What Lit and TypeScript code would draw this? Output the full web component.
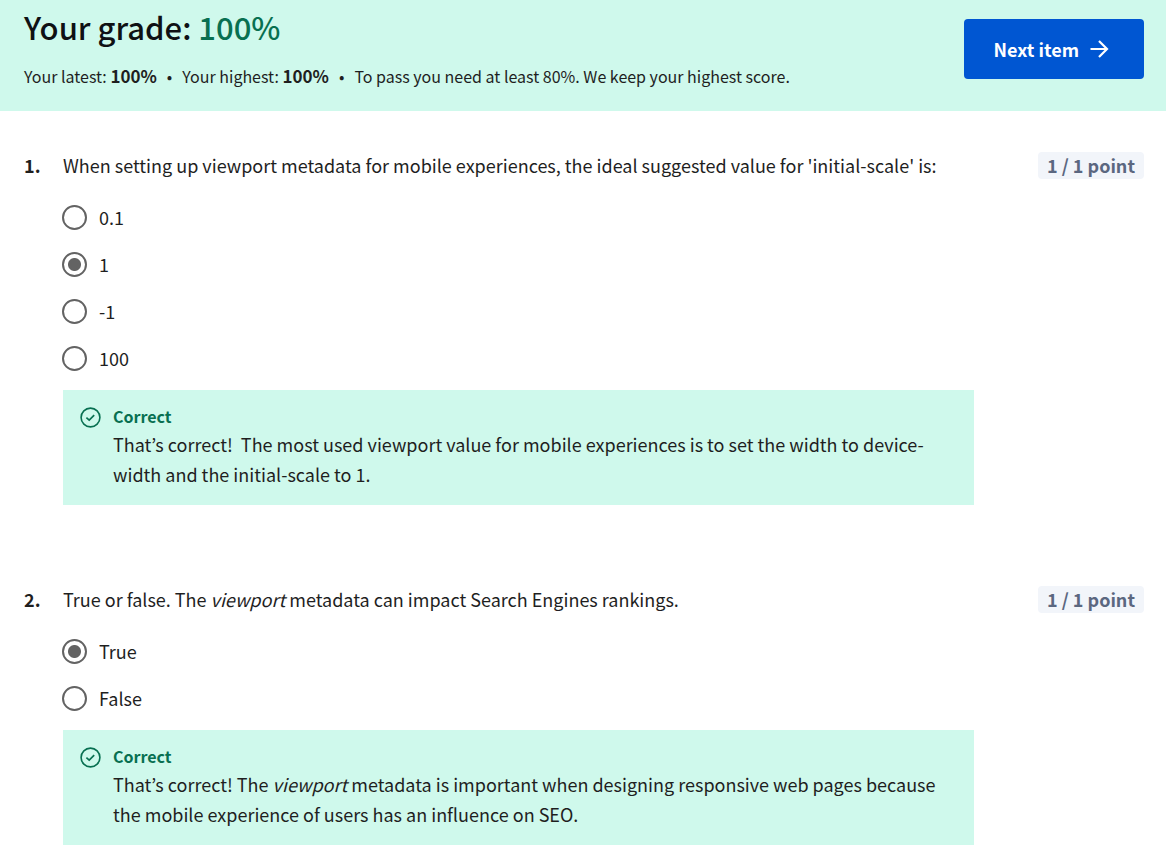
import { LitElement, html, css, svg, TemplateResult } from "lit";
import { customElement, property } from "lit/decorators.js";

interface Question {
  id: number;
  prompt: TemplateResult;
  options: string[];
  selected: number;
  feedback: TemplateResult;
}

const QUESTIONS: Question[] = [
  {
    id: 1,
    prompt: html`When setting up viewport metadata for mobile experiences, the ideal suggested value for 'initial-scale' is:`,
    options: ["0.1", "1", "-1", "100"],
    selected: 1,
    feedback: html`That’s correct!&nbsp; The most used viewport value for mobile experiences is to set the width to device-width and the initial-scale to 1.`,
  },
  {
    id: 2,
    prompt: html`True or false. The <em>viewport</em> metadata can impact Search Engines rankings.`,
    options: ["True", "False"],
    selected: 0,
    feedback: html`That’s correct! The <em>viewport</em> metadata is important when designing responsive web pages because the mobile experience of users has an influence on SEO.`,
  },
];

const arrowIcon = svg`<path d="M1.500 10h16.500M10 2l8 8-8 8" fill="none" stroke="currentColor" stroke-width="2.200"/>`;

@customElement("quiz-question")
export class QuizQuestion extends LitElement {
  @property({ attribute: false }) question!: Question;

  static styles = css`
    :host {
      display: block;
    }
    .question {
      display: grid;
      grid-template-columns: 39px minmax(0, 1fr) auto;
      align-items: start;
    }
    .number {
      font-weight: 700;
    }
    .body {
      grid-column: 2 / 4;
      min-width: 0;
    }
    .prompt {
      margin: 0;
    }
    .options {
      display: flex;
      flex-direction: column;
      align-items: flex-start;
      padding: 15px 0 8px;
    }
    .option {
      display: flex;
      align-items: center;
      gap: 12px;
      height: 47px;
      margin-left: -1px;
    }
    .radio {
      appearance: none;
      flex: none;
      box-sizing: border-box;
      width: 25px;
      height: 25px;
      margin: 0;
      border: 2px solid #636363;
      border-radius: 50%;
    }
    .radio:checked {
      background: radial-gradient(circle, #636363 6px, transparent 7px);
    }
    .points {
      padding: 0 9px;
      border-radius: 4px;
      background: #f2f5fa;
      color: #5b6780;
      font-weight: 700;
      line-height: 27px;
      white-space: nowrap;
    }
    .feedback {
      display: flex;
      gap: 12px;
      margin-right: 170px;
      padding: 13px 17px 16px;
      background: #cff9ec;
    }
    .check {
      flex: none;
      width: 21px;
      height: 21px;
      margin-top: 4px;
      color: #087051;
    }
    .title {
      margin: 0;
      color: #087051;
      font-size: 16px;
      font-weight: 700;
      line-height: 26px;
    }
    .message {
      margin: 0;
      line-height: 30px;
    }
    em {
      font-style: italic;
    }
  `;

  render() {
    const { id, prompt, options, selected, feedback } = this.question;
    return html`
      <section class="question">
        <span class="number">${id}.</span>
        <p class="prompt" id="prompt">${prompt}</p>
        <span class="points">1 / 1 point</span>
        <div class="body">
          <div class="options" role="radiogroup" aria-labelledby="prompt">
            ${options.map(
              (option, i) => html`
                <label class="option">
                  <input class="radio" type="radio" name="answer-${id}" .checked=${i === selected} />
                  <span>${option}</span>
                </label>
              `
            )}
          </div>
          <div class="feedback">
            <svg class="check" viewBox="0 0 21 21" fill="none" stroke="currentColor" aria-hidden="true">
              <circle cx="10.500" cy="10.500" r="9.400" stroke-width="1.600" />
              <path d="M6.400 10.700l2.800 2.400 5-5" stroke-width="1.700" />
            </svg>
            <div>
              <h3 class="title">Correct</h3>
              <p class="message">${feedback}</p>
            </div>
          </div>
        </div>
      </section>
    `;
  }
}

@customElement("app-root")
export class AppRoot extends LitElement {
  static styles = css`
    :host {
      display: block;
      min-height: 100vh;
      background: #fff;
      color: #1f1f1f;
      font-family: "Noto Sans CJK KR", "Noto Sans", sans-serif;
      font-size: 18px;
      line-height: 27px;
    }
    .banner {
      display: flex;
      align-items: flex-start;
      justify-content: space-between;
      gap: 24px;
      padding: 6px 22px 22px 24px;
      background: #cff9ec;
    }
    .grade {
      margin: 0;
      color: #0f1114;
      font-size: 31px;
      font-weight: 500;
      line-height: 42px;
    }
    .score {
      color: #087051;
    }
    .summary {
      display: flex;
      flex-wrap: wrap;
      gap: 10px;
      margin: 15px 0 0;
      font-size: 16px;
      line-height: 26px;
    }
    .summary strong {
      font-size: 17px;
      font-weight: 700;
    }
    .next {
      display: flex;
      align-items: center;
      justify-content: center;
      gap: 10px;
      flex: none;
      margin-top: 13px;
      padding: 16px 35px 16px 30px;
      border: 0;
      border-radius: 4px;
      background: #0056d2;
      color: #fff;
      font: inherit;
      font-weight: 700;
      line-height: 28px;
    }
    .arrow {
      width: 20px;
      height: 20px;
    }
    .questions {
      display: flex;
      flex-direction: column;
      gap: 81px;
      padding: 41px 22px 20px 24px;
    }
  `;

  render() {
    return html`
      <header class="banner">
        <div>
          <h1 class="grade">Your grade: <span class="score">100%</span></h1>
          <p class="summary">
            <span>Your latest: <strong>100%</strong></span>
            <span>•</span>
            <span>Your highest: <strong>100%</strong></span>
            <span>•</span>
            <span>To pass you need at least 80%. We keep your highest score.</span>
          </p>
        </div>
        <button class="next" type="button">
          Next item
          <svg class="arrow" viewBox="0 0 20 20" aria-hidden="true">${arrowIcon}</svg>
        </button>
      </header>
      <main class="questions">
        ${QUESTIONS.map((q) => html`<quiz-question .question=${q}></quiz-question>`)}
      </main>
    `;
  }
}
